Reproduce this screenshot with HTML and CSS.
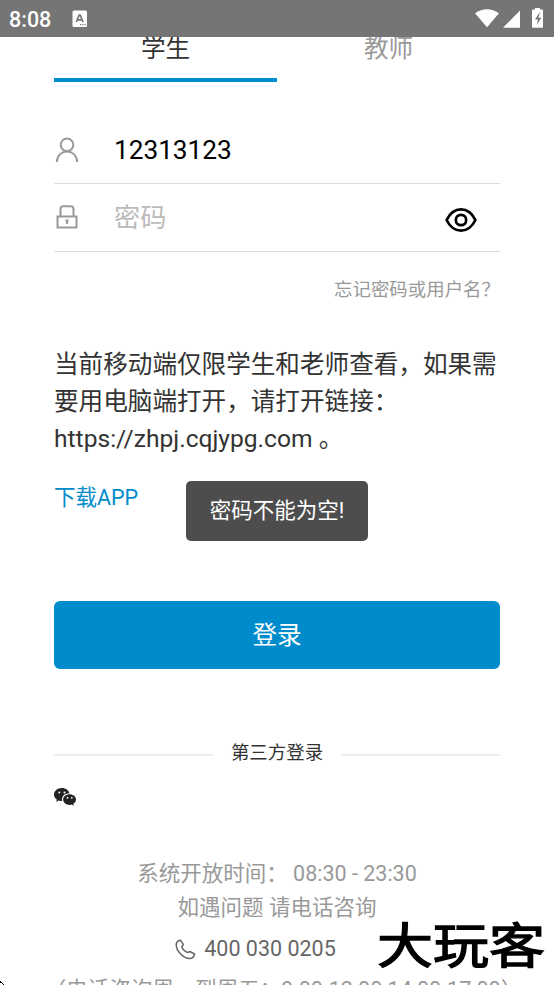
FILE: index.html
```html
<!DOCTYPE html>
<html lang="zh-CN">
<head>
<meta charset="utf-8">
<title>登录</title>
<link rel="stylesheet" href="styles.css">
</head>
<body>
<header class="status">
  <span class="clock">8:08</span>
  <svg class="ime" width="16" height="18" viewBox="0 0 16 18"><rect x=".5" y=".5" width="14.5" height="16.5" rx="1.5" fill="#fff"/><path d="M4.3 12 7.2 5h1l2.8 7M5.2 9.8h5" fill="none" stroke="#757575" stroke-width="1.7"/><path d="M8 14.7h1.2M10.2 14.7h1.2M12.4 14.7h1.2" stroke="#757575" stroke-width="1.2"/></svg>
  <svg class="signals" width="70" height="21" viewBox="475 7 70 21" fill="#fff"><path d="M475 13.2Q487 5.2 499 13.2L487 27.3Z"/><path d="M503 27.7 520 10.5V27.7Z"/><path d="M535 8h5v1.6h2q1 0 1 1V26.700q0 1-1 1H533q-1 0-1-1V10.600q0-1 1-1h2Z"/><path d="m539.500 12.500-4.500 7h3l-1.300 5.500 4.600-7.300h-3l1.800-5.200Z" fill="#757575"/></svg>
</header>
<main class="page">
  <nav class="tabs"><a class="tab active">学生</a><a class="tab">教师</a></nav>
  <form class="form">
    <label class="field">
      <svg width="26" height="26" viewBox="0 0 26 26" fill="none" stroke="#999" stroke-width="2"><circle cx="13" cy="7.800" r="6.300"/><path d="M2.800 25C3.500 11 22.500 11 23.200 25"/></svg>
      <span class="value">12313123</span>
    </label>
    <label class="field password">
      <svg class="lock" width="26" height="26" viewBox="0 0 26 26" fill="none" stroke="#999" stroke-width="2"><path d="M3.500 12.500h19v11h-19ZM6.500 12.500V5q0-2.800 2.800-2.800h7.400q2.800 0 2.800 2.800v7.500"/><path d="M11.500 16.500h3M13 16v4"/></svg>
      <span class="placeholder">密码</span>
      <svg class="eye" width="32" height="26" viewBox="0 0 32 26" fill="none" stroke="#000" stroke-width="2.700"><path d="M1.600 13C8.500-1.200 23.500-1.200 30.400 13 23.500 27.200 8.500 27.200 1.600 13Z"/><circle cx="16" cy="13" r="5.200"/></svg>
    </label>
  </form>
  <a class="forgot">忘记密码或用户名？</a>
  <p class="notice">当前移动端仅限学生和老师查看，如果需要用电脑端打开，请打开链接：<br>https://zhpj.cqjypg.com 。</p>
  <a class="download">下载APP</a>
  <button class="login">登录</button>
  <div class="divider"><span>第三方登录</span></div>
  <svg class="wechat" width="22" height="18" viewBox="0 0 22 18"><path fill="#222" d="M7.800 0C3.400 0 0 2.900 0 6.600c0 2.100 1.100 3.900 2.900 5.100L2.200 14l2.700-1.400q1.500.5 3.300.5C7 8.600 10.500 5.400 15.500 5.300 14.700 2.200 11.600 0 7.800 0Z"/><path fill="#222" d="M22 11.500c0-3-2.900-5.300-6.400-5.300s-6.500 2.300-6.500 5.300 2.900 5.400 6.500 5.400q1.100 0 2.200-.3l2 1.100-.5-1.900C21 14.800 22 13.300 22 11.500Z"/><g fill="#fff"><circle cx="5.300" cy="4.500" r="1"/><circle cx="10.500" cy="4.500" r="1"/><circle cx="13.500" cy="9.800" r=".9"/><circle cx="17.800" cy="9.800" r=".9"/></g></svg>
  <footer class="footer">
    <p>系统开放时间： 08:30 - 23:30</p>
    <p>如遇问题 请电话咨询</p>
    <p class="phone"><svg width="21" height="21" viewBox="0 0 21 21" fill="none" stroke="#666" stroke-width="1.500" stroke-linejoin="round"><path d="M5.500 1.200 8.300 5.300Q8.500 6.200 6.800 7.500 7.800 11.500 12.800 13.600L14.800 12.500 19.500 15Q19.500 17.500 16.500 19.300C8.500 20.500.5 11.500 1.300 4.500Q2.500 1.200 5.500 1.200Z"/></svg>400 030 0205</p>
    <p class="hours">（电话咨询周一到周五：9:00-12:00 14:00-17:00）</p>
  </footer>
</main>
<div class="toast">密码不能为空!</div>
<div class="watermark">大玩客</div>
<svg class="corner" width="4" height="4" viewBox="0 0 4 4"><path d="M0 0h1v1h1v1h1v1h1v1H3V3H2V2H0Z"/></svg>
</body>
</html>
```
FILE: styles.css
```css
* { box-sizing: border-box; }
body {
  margin: 0;
  height: 985px;
  position: relative;
  overflow: hidden;
  background: #fff;
  color: #333;
  font-family: Roboto, "Noto Sans CJK SC", sans-serif;
  font-size: 24.6px;
}
p { margin: 0; }
svg { display: block; flex: none; }
.status {
  position: absolute;
  inset: 0 0 auto;
  z-index: 2;
  height: 37px;
  padding: 0 9px;
  display: flex;
  align-items: center;
  background: #757575;
  color: #fff;
}
.clock { width: 63px; font-size: 21.500px; font-weight: 500; line-height: 37px; padding-top: 2px; }
.signals { margin: -2px 0 0 auto; }
.page { padding: 13px 54px 0; }
.tabs { display: flex; height: 69px; }
.tab { flex: 1; text-align: center; line-height: 71px; color: #999; }
.active { color: #333; border-bottom: 4.500px solid #008ccc; }
.form { padding-top: 34px; }
.field {
  display: flex;
  align-items: center;
  height: 68px;
  border-bottom: 1px solid #ddd;
  font-size: 26.200px;
}
.value, .placeholder { margin-left: 34px; }
.value { color: #000; }
.placeholder { padding-bottom: 3px; color: #bbb; }
.lock { margin-bottom: 2px; }
.eye { margin: 5px 23px 0 auto; }
.forgot { display: block; margin-top: 23px; text-align: right; font-size: 18.460px; line-height: 30px; color: #999; }
.notice { margin-top: 41px; line-height: 37px; }
.download { display: block; margin-top: 24px; font-size: 21.500px; line-height: 34px; color: #008ccc; }
.login {
  display: block;
  width: 100%;
  height: 68px;
  margin-top: 86px;
  padding: 0 0 5px;
  border: 0;
  border-radius: 6px;
  background: #008ccc;
  color: #fff;
  font: inherit;
}
.divider { display: flex; align-items: center; gap: 18px; height: 30px; margin-top: 70px; font-size: 18.460px; }
.divider::before, .divider::after { content: ""; flex: 1; height: 2px; margin-top: 2px; background: #eee; }
.divider span { margin-top: -6px; }
.wechat { margin-top: 19px; }
.footer { margin-top: 51px; text-align: center; font-size: 21.500px; line-height: 34px; color: #999; white-space: nowrap; }
.phone { display: flex; align-items: center; justify-content: center; gap: 8px; height: 48px; padding-right: 43px; color: #666; }
.hours { margin: 0 -40px; padding-left: 13px; }
.toast {
  position: absolute;
  left: 186px;
  top: 481px;
  width: 182px;
  height: 60px;
  border-radius: 5px;
  background: #4d4d4d;
  color: #fff;
  text-align: center;
  font-size: 21.500px;
  line-height: 60px;
}
.watermark {
  position: absolute;
  left: 377px;
  top: 913px;
  color: #000;
  font-size: 56px;
  font-weight: 400;
  line-height: 68px;
  transform: scaleY(.86);
  -webkit-text-stroke: 1.500px #000;
  text-shadow: 0 0 2px #fff8d8;
}
.corner { position: absolute; left: 0; bottom: 0; }
```
